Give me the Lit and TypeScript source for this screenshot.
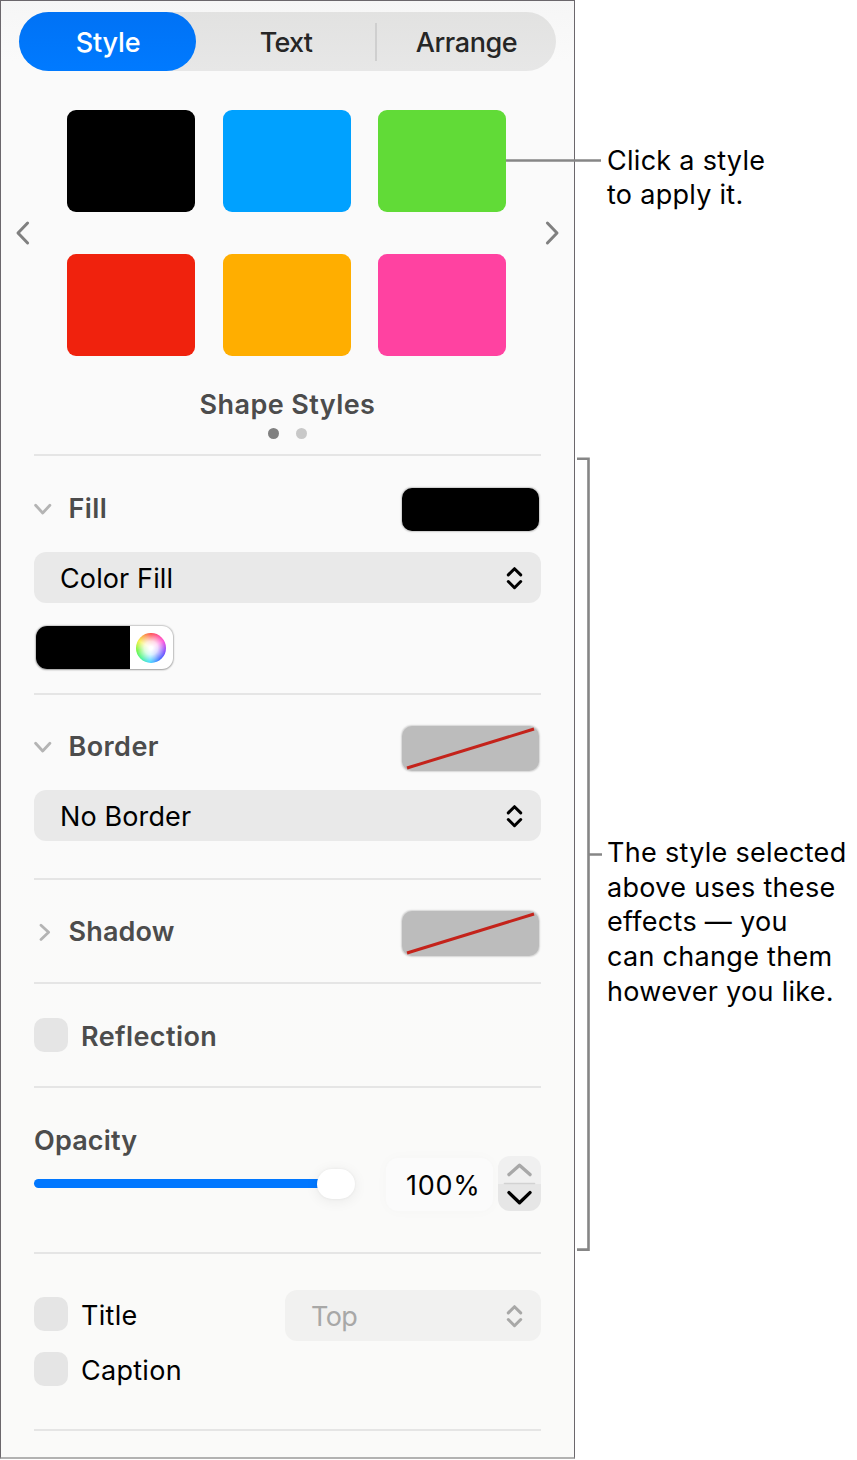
import { LitElement, html, css, svg } from "lit";
import { customElement, property } from "lit/decorators.js";

const SWATCHES = ["black", "blue", "green", "red", "orange", "pink"];

@customElement("pop-up")
class PopUp extends LitElement {
  @property() label = "";
  @property({ type: Boolean, reflect: true }) disabled = false;
  static styles = css`
    :host { display: flex; align-items: center; justify-content: space-between; box-sizing: border-box;
      height: 51px; padding: 1px 18px 0 26px; border-radius: 12px; background: #e9e9e9; color: #000; }
    :host([disabled]) { background: #f1f1f0; color: #a8a8a7; }
    .label { white-space: nowrap; padding-top: 2px; }
    .arrows { width: 17px; height: 24px; fill: none; stroke: currentColor; stroke-width: 3;
      stroke-linecap: round; stroke-linejoin: round; }
  `;
  render() {
    return html`<span class="label">${this.label}</span>
      <svg class="arrows" viewBox="0 0 17 24"><path d="M2.3 8.9 8.5 2.7l6.2 6.2M2.3 15.5l6.2 6.2 6.2-6.2" /></svg>`;
  }
}

@customElement("app-root")
class AppRoot extends LitElement {
  static styles = css`
    :host { display: block; height: 1460px; overflow: hidden; background: #fff; color: #000;
      font: 400 27px/34px Inter, "Liberation Sans", sans-serif; }
    .page { display: flex; position: relative; height: 1460px; }
    .panel { box-sizing: border-box; width: 575px; height: 1459px; padding-top: 11px;
      border: 1px solid #6b676c; border-bottom: 2px solid #b2b2b2; display: flex; flex-direction: column; flex: none;
      background: linear-gradient(#f6f6f6, #fafafa 60px, #fafafa 800px, #fafaf9 1100px, #fafaf9); }
    .tabs { display: flex; align-items: center; margin: 0 18px; height: 59px; border-radius: 30px; flex: none;
      background: linear-gradient(#e2e2e1, #e7e7e7); color: #262626; font-weight: 450; }
    .tab { flex: none; width: 180px; height: 59px; box-sizing: border-box; text-align: center; line-height: 61px; }
    .tab.active { width: 177px; border-radius: 30px; color: #fff; background: linear-gradient(#0072f5, #007aff);
      font-weight: 500; letter-spacing: -0.16px; padding-left: 1px; }
    .tab.text { letter-spacing: -0.7px; }
    .tab.arrange { letter-spacing: -0.4px; padding-left: 1px; }
    .split { width: 2px; height: 38px; margin: 0 -1px; background: #cfcfcf; }
    .styles { display: flex; align-items: center; justify-content: space-between; padding: 39px 14px 0 14px; }
    .grid { display: grid; grid-template-columns: repeat(3, 128px); grid-auto-rows: 102px; column-gap: 27.5px; row-gap: 42.4px; margin-right: 2px; }
    .swatch { border-radius: 9px; }
    .black { background: #000; } .blue { background: #00a1ff; } .green { background: #61db37; }
    .red { background: #f0220d; } .orange { background: #ffae00; } .pink { background: #ff42a1; }
    svg { fill: none; stroke-linecap: round; stroke-linejoin: round; display: block; flex: none; }
    .nav { width: 16px; height: 26px; stroke: #808080; stroke-width: 3; }
    .title { margin-top: 32px; text-align: center; letter-spacing: 0.42px; }
    .dots { display: flex; justify-content: center; gap: 17px; margin-top: 5.5px; }
    .dot { width: 11px; height: 11px; border-radius: 50%; background: #c8c8c8; }
    .dot.on { background: #808080; }
    .head { font-weight: 600; color: #4c4c4c; letter-spacing: 0.42px; }
    .head.tight { letter-spacing: 0.15px; }
    .section { margin: 0 33px; box-sizing: border-box; border-top: 2px solid #e5e5e5; flex: none; display: flex; flex-direction: column; }
    .row { display: flex; align-items: center; }
    .disc { width: 18px; height: 18px; stroke: #b4b4b4; stroke-width: 2.8; margin-right: 16.5px; }
    .bar { height: 43px; }
    .push { margin-left: auto; }
    .well { width: 137px; height: 43px; border-radius: 10px; background: #000; margin-right: 2px; margin-top: 2px; flex: none;
      box-shadow: 0 0 1.5px 1px #0003; }
    .well.none { width: 137px; height: 45px; margin-right: 2px; margin-top: 3px; background: #bcbcbc; box-shadow: 0 0 1.5px 0.5px #00000026; }
    .slash { width: 137px; height: 45px; stroke: #c4231b; stroke-width: 3; stroke-linecap: butt; }
    .menu { margin-top: 22px; letter-spacing: 0.12px; }
    .fill { margin-top: 15.5px; height: 239px; padding-top: 31px; }
    .color { display: flex; width: 137px; height: 43px; margin: 23px 0 0 2px; border-radius: 11px; background: #fff; overflow: hidden;
      box-shadow: 0 0 1.5px 1px #0003, 0 1px 2px #0003; }
    .ink { width: 94px; background: #000; }
    .wheel { width: 30px; height: 30px; margin: 7px 0 0 6px; border-radius: 50%;
      background: radial-gradient(circle closest-side, #fff 10%, #fffc 45%, #fff0 100%),
        conic-gradient(#ff4a4a, #ff48d8 60deg, #7a45ff 105deg, #3a62ff 140deg, #3fd8ff 185deg, #45f58a 225deg, #6cf53c 260deg, #f5f03c 300deg, #ff4a4a); }
    .border { height: 185px; padding-top: 30px; }
    .shadow { height: 104px; padding-top: 30px; }
    .reflection { height: 104px; padding-top: 34px; }
    .opacity { height: 166px; padding-top: 36px; }
    .controls { margin-top: -1px; }
    .labels { height: 177px; padding-top: 36px; }
    .box { width: 34px; height: 34px; border-radius: 10px; background: #e5e5e5; margin-right: 13px; flex: none; }
    .check { height: 34px; }
    .check .name { padding-top: 3px; }
    .name { letter-spacing: 0.28px; }
    .head.name { letter-spacing: 0.42px; }
    .first .box { margin-top: -3px; }
    .second-row { margin-top: 11px; }
    .small { width: 256px; letter-spacing: -0.6px; }
    .slider { display: flex; align-items: center; width: 321px; height: 30px; margin-top: -1px; }
    .track { height: 9px; flex: 1; border-radius: 4.5px 0 0 4.5px; background: #0077ff; margin-right: -2px; }
    .knob { width: 38px; height: 30px; border-radius: 15px; background: #fff; box-shadow: 0 2px 14px #00000012, 0 0 3px #0000000f; }
    .value { width: 107px; height: 53px; margin-left: 31px; border-radius: 12px; background: #fbfbfb; box-shadow: 0 0 14px #00000006;
      line-height: 56px; box-sizing: border-box; padding-left: 20px; letter-spacing: 0.7px; }
    .stepper { width: 43px; height: 55px; border-radius: 12px; background: linear-gradient(#f0f0f0 50%, #e6e6e6 50%); margin-left: 5px;
      margin-top: -1px; stroke-width: 3.4; }
    .end { border-top: 2px solid #e5e5e5; margin: 0 33px; }
    .notes { padding: 143.5px 0 0 32px; line-height: 34.6px; white-space: nowrap; }
    .note { margin: 0; letter-spacing: 0.28px; }
    .second { margin-top: 623.5px; letter-spacing: 0.3px; }
    .lines { position: absolute; left: 500px; top: 0; width: 110px; height: 1300px; stroke: #868686; stroke-width: 2.6; stroke-linecap: butt; stroke-linejoin: miter; }
  `;
  disclosure(open: boolean) {
    return html`<svg class="disc" viewBox="0 0 18 18">${open ? svg`<path d="M1.6 5.2 8.7 13l7.2-7.8" />` : svg`<path d="M7 2.2 14.6 9.3 7 16.4" />`}</svg>`;
  }
  noneWell() {
    return html`<div class="well none push"><svg class="slash" viewBox="0 0 137 45"><path d="M5 42 132 3" /></svg></div>`;
  }
  render() {
    return html`<div class="page">
      <main class="panel">
        <nav class="tabs">
          <div class="tab active">Style</div>
          <div class="tab text">Text</div>
          <div class="split"></div>
          <div class="tab arrange">Arrange</div>
        </nav>
        <div class="styles">
          <svg class="nav" viewBox="0 0 16 26"><path d="M12.6 3 3 13l9.6 10" /></svg>
          <div class="grid">${SWATCHES.map((c) => html`<div class="swatch ${c}"></div>`)}</div>
          <svg class="nav" viewBox="0 0 16 26"><path d="M3.4 3 13 13 3.4 23" /></svg>
        </div>
        <div class="title head">Shape Styles</div>
        <div class="dots"><div class="dot on"></div><div class="dot"></div></div>
        <section class="section fill">
          <div class="row bar">${this.disclosure(true)}<span class="head">Fill</span><div class="well push"></div></div>
          <pop-up class="menu" label="Color Fill"></pop-up>
          <div class="color"><div class="ink"></div><div class="wheel"></div></div>
        </section>
        <section class="section border">
          <div class="row bar">${this.disclosure(true)}<span class="head">Border</span>${this.noneWell()}</div>
          <pop-up class="menu" label="No Border"></pop-up>
        </section>
        <section class="section shadow">
          <div class="row bar">${this.disclosure(false)}<span class="head tight">Shadow</span>${this.noneWell()}</div>
        </section>
        <section class="section reflection">
          <div class="row check"><div class="box"></div><span class="head name">Reflection</span></div>
        </section>
        <section class="section opacity">
          <div class="head tight">Opacity</div>
          <div class="row controls">
            <div class="slider"><div class="track"></div><div class="knob"></div></div>
            <div class="value">100%</div>
            <svg class="stepper" viewBox="0 0 43 55">
              <path d="M11 18.6 21.5 9.2 32 18.6" stroke="#a8a8a8" />
              <path d="M6.5 27.5h30" stroke="#d2d2d2" stroke-width="1.6" />
              <path d="M11 36.6 21.5 46.8 32 36.6" stroke="#000" />
            </svg>
          </div>
        </section>
        <section class="section labels">
          <div class="row first"><div class="box"></div><span class="name">Title</span><pop-up class="push small" label="Top" disabled></pop-up></div>
          <div class="row check second-row"><div class="box"></div><span class="name">Caption</span></div>
        </section>
        <div class="end"></div>
      </main>
      <aside class="notes">
        <p class="note">Click a style<br />to apply it.</p>
        <p class="note second">The style selected<br />above uses these<br />effects — you<br />can change them<br />however you like.</p>
      </aside>
      <svg class="lines" viewBox="0 0 110 1300">
        <path d="M6 160.5H101M77 458.8H88.5V1249.6H77M88.5 854.5H102" />
      </svg>
    </div>`;
  }
}
